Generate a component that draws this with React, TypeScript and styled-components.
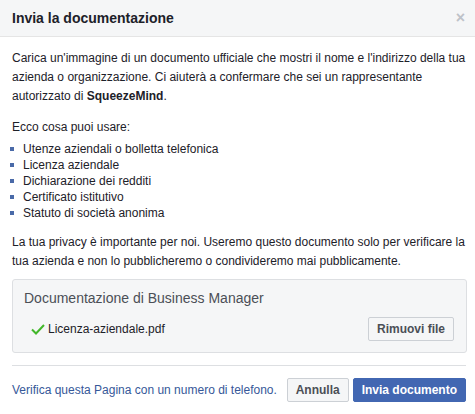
import React from 'react';
import styled, { createGlobalStyle } from 'styled-components';

const GlobalStyle = createGlobalStyle`
  html, body {
    margin: 0;
    padding: 0;
    background: #ffffff;
  }
  body {
    font-family: Helvetica, Arial, "Liberation Sans", sans-serif;
    color: #1d2129;
    font-size: 12px;
  }
`;

const Dialog = styled.div({
  width: "475px",
  height: "414px",
  background: "#ffffff",
  display: "flex",
  flexDirection: "column",
  overflow: "hidden"
});

const Header = styled.div({
  height: "36px",
  background: "#f5f6f7",
  borderBottom: "1px solid #e5e5e5",
  display: "flex",
  alignItems: "center",
  justifyContent: "space-between",
  padding: "0 10px 0 12px"
});

const Title = styled.h3({
  margin: 0,
  fontSize: "14px",
  fontWeight: "bold",
  color: "#1d2129",
  lineHeight: "19px"
});

const Close = styled.span({
  color: "#bec2c9",
  fontSize: "16px",
  fontWeight: "bold",
  lineHeight: "16px",
  cursor: "pointer"
});

const Body = styled.div({
  padding: "12px 9px 0 12px"
});

const Para = styled.p<{ $gap?: number }>(props => ({
  margin: `0 0 ${props.$gap ?? 12}px 0`,
  lineHeight: "19px",
  color: "#1d2129"
}));

const List = styled.ul({
  listStyle: "none",
  margin: "0 0 12px 0",
  padding: 0
});

const Item = styled.li({
  lineHeight: "16px",
  paddingLeft: "11px",
  position: "relative",
  "&::before": {
    content: '""',
    position: "absolute",
    left: "-2px",
    top: "6px",
    width: "4px",
    height: "4px",
    background: "#4a6aa8"
  }
});

const UploadBox = styled.div({
  border: "1px solid #dddfe2",
  borderRadius: "3px",
  background: "#f5f6f7",
  padding: "8px 12px 11px 11px",
  marginTop: "-4px",
  marginRight: "-1px"
});

const BoxTitle = styled.div({
  fontSize: "14px",
  color: "#4b4f56",
  lineHeight: "20px",
  marginBottom: "9px"
});

const FileRow = styled.div({
  display: "flex",
  alignItems: "center",
  justifyContent: "space-between",
  paddingLeft: "6px"
});

const FileName = styled.div({
  display: "flex",
  alignItems: "center",
  gap: "2px",
  color: "#1d2129"
});

const Button = styled.button<{ $primary?: boolean }>(props => ({
  fontFamily: "inherit",
  fontSize: "12px",
  fontWeight: "bold",
  height: "24px",
  lineHeight: "22px",
  padding: "0 8px",
  borderRadius: "2px",
  border: props.$primary ? "1px solid #4267b2" : "1px solid #ccd0d5",
  background: props.$primary ? "#4267b2" : "#f5f6f7",
  color: props.$primary ? "#ffffff" : "#4b4f56",
  cursor: "pointer"
}));

const Footer = styled.div({
  margin: "12px 9px 0 12px",
  borderTop: "1px solid #dddfe2",
  padding: "12px 0",
  display: "flex",
  alignItems: "center"
});

const PhoneLink = styled.a({
  color: "#365899",
  textDecoration: "none",
  flex: 1
});

const Actions = styled.div({
  display: "flex",
  gap: "4px"
});

const Check = () => (
  <svg width="16" height="16" viewBox="0 0 16 16">
    <path d="M2 8.5 L6 12.5 L14 4" fill="none" stroke="#42b72a" strokeWidth="2" />
  </svg>
);

const App = () => (
  <>
    <GlobalStyle />
    <Dialog>
      <Header>
        <Title>Invia la documentazione</Title>
        <Close>×</Close>
      </Header>
      <Body>
        <Para>
          Carica un'immagine di un documento ufficiale che mostri il nome e l'indirizzo della tua
          azienda o organizzazione. Ci aiuterà a confermare che sei un rappresentante
          autorizzato di <b>SqueezeMind</b>.
        </Para>
        <Para $gap={4}>Ecco cosa puoi usare:</Para>
        <List>
          <Item>Utenze aziendali o bolletta telefonica</Item>
          <Item>Licenza aziendale</Item>
          <Item>Dichiarazione dei redditi</Item>
          <Item>Certificato istitutivo</Item>
          <Item>Statuto di società anonima</Item>
        </List>
        <Para>
          La tua privacy è importante per noi. Useremo questo documento solo per verificare la
          tua azienda e non lo pubblicheremo o condivideremo mai pubblicamente.
        </Para>
        <UploadBox>
          <BoxTitle>Documentazione di Business Manager</BoxTitle>
          <FileRow>
            <FileName>
              <Check />
              Licenza-aziendale.pdf
            </FileName>
            <Button>Rimuovi file</Button>
          </FileRow>
        </UploadBox>
      </Body>
      <Footer>
        <PhoneLink href="#">Verifica questa Pagina con un numero di telefono.</PhoneLink>
        <Actions>
          <Button>Annulla</Button>
          <Button $primary>Invia documento</Button>
        </Actions>
      </Footer>
    </Dialog>
  </>
);

export default App;
